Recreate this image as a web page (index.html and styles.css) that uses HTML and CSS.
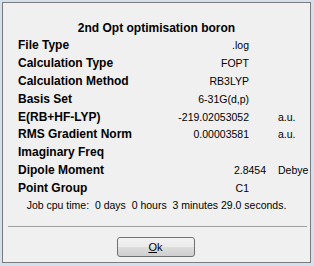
FILE: index.html
```html
<!DOCTYPE html>
<html lang="en">
<head>
  <meta charset="UTF-8">
  <title>2nd Opt optimisation boron</title>
  <link rel="stylesheet" href="styles.css">
</head>
<body>
  <div class="dialog">
    <h1 class="title">2nd Opt optimisation boron</h1>

    <div class="summary">
      <span class="label">File Type</span>
      <span class="value">.log</span>
      <span class="unit"></span>

      <span class="label">Calculation Type</span>
      <span class="value">FOPT</span>
      <span class="unit"></span>

      <span class="label">Calculation Method</span>
      <span class="value">RB3LYP</span>
      <span class="unit"></span>

      <span class="label">Basis Set</span>
      <span class="value">6-31G(d,p)</span>
      <span class="unit"></span>

      <span class="label">E(RB+HF-LYP)</span>
      <span class="value">-219.02053052</span>
      <span class="unit">a.u.</span>

      <span class="label">RMS Gradient Norm</span>
      <span class="value">0.00003581</span>
      <span class="unit">a.u.</span>

      <span class="label">Imaginary Freq</span>
      <span class="value"></span>
      <span class="unit"></span>

      <span class="label">Dipole Moment</span>
      <span class="value value-wide">2.8454</span>
      <span class="unit">Debye</span>

      <span class="label">Point Group</span>
      <span class="value">C1</span>
      <span class="unit"></span>
    </div>

    <p class="cpu-time">Job cpu time:&nbsp; 0 days&nbsp; 0 hours&nbsp; 3 minutes 29.0 seconds.</p>

    <div class="footer">
      <button class="ok-button" type="button"><u>O</u>k</button>
    </div>
  </div>
</body>
</html>
```

FILE: styles.css
```css
body {
  margin: 0;
  background: #d4e0ec;
  font-family: "Liberation Sans", Arial, sans-serif;
  font-size: 10.5px;
  color: #000;
}
.dialog {
  margin: 2px 0 0 2px;
  width: 307px;
  height: 259px;
  border: 1px solid #7a7a7a;
  background-color: #f0f0f0;
  display: flex;
  flex-direction: column;
}
.title {
  margin: 16px 0 0;
  font-size: 12px;
  line-height: 18px;
  font-weight: bold;
  text-align: center;
}
.summary {
  display: grid;
  grid-template-columns: 150px 81px 29px auto;
  grid-auto-rows: 17.9px;
  align-items: center;
  margin-top: -1px;
  padding-left: 15px;
}
.summary .unit {
  grid-column: 4;
}
.label {
  font-size: 12px;
  font-weight: bold;
}
.value {
  text-align: right;
  white-space: nowrap;
}
.value-wide {
  margin-right: -17px;
}
.cpu-time {
  margin: 0;
  line-height: 16px;
  text-align: center;
}
.footer {
  margin: 13px 3px 0 5px;
  border-top: 1px solid #a0a0a0;
  display: flex;
  justify-content: center;
  padding-top: 10px;
}
.ok-button {
  width: 78px;
  height: 20px;
  margin-left: -4px;
  padding: 0;
  border: 1px solid #707070;
  border-radius: 3px;
  background: linear-gradient(#f2f2f2 0%, #ebebeb 50%, #dddddd 51%, #cfcfcf 100%);
  font-family: inherit;
  font-size: 11px;
  color: #000;
}
```
